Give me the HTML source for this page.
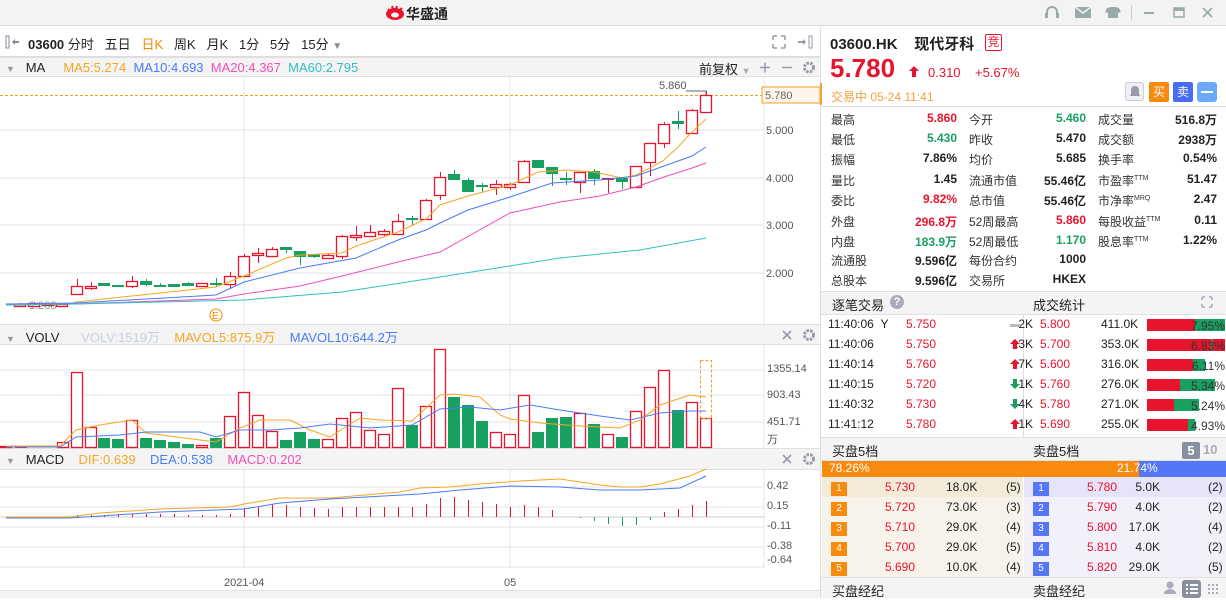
<!DOCTYPE html>
<html><head><meta charset="utf-8">
<style>
*{margin:0;padding:0;box-sizing:border-box}
body{width:1226px;height:598px;overflow:hidden;background:#fff;font-family:"Liberation Sans","Noto Sans CJK SC",sans-serif;font-size:12px;color:#222;position:relative}
.abs{position:absolute;white-space:nowrap}
.top{left:0;top:0;width:1226px;height:26px;background:#f3f3f3;border-bottom:1px solid #ddd}
.bar{background:#f4f4f4;border-top:1px solid #e0e0e0;border-bottom:1px solid #e0e0e0}
.r{color:#e8142c}.g{color:#18a060}.o{color:#f08a00}
.tbl div{position:absolute;white-space:nowrap;font-size:12px}
.lab{color:#333}
.b{font-weight:bold}
.num{display:inline-block;width:16px;height:14px;color:#fff;font-size:10px;text-align:center;line-height:14px}
</style></head><body>
<div class="abs top"></div>
<svg class="abs" style="left:384px;top:5px" width="22" height="16" viewBox="0 0 22 16"><ellipse cx="11" cy="9" rx="9" ry="6" fill="#e8142c"/><ellipse cx="11" cy="10" rx="4" ry="2.5" fill="#f3f3f3"/><path d="M4 4l2 2M8 1l1 3M13 1l-1 3M18 3l-2 2" stroke="#e8142c" stroke-width="2"/></svg>
<div class="abs b" style="left:406px;top:4px;font-size:14px;color:#222">华盛通</div>
<svg class="abs" style="left:1040px;top:4px" width="186" height="18" viewBox="0 0 186 18"><path d="M7 12v-4a5 5 0 0 1 10 0v4" stroke="#9aa" stroke-width="2" fill="none"/><rect x="5" y="9" width="3" height="5" fill="#9aa"/><rect x="16" y="9" width="3" height="5" fill="#9aa"/><rect x="35" y="3" width="16" height="11" fill="#9aa"/><path d="M35 3l8 6 8-6" stroke="#f3f3f3" stroke-width="1.5" fill="none"/><path d="M67 4l4-1h4l4 1 2 4-3 1v5h-10v-5l-3-1z" fill="#9aa"/><rect x="91" y="1" width="1" height="15" fill="#ccc"/><rect x="104" y="8" width="10" height="2" fill="#9aa"/><rect x="134" y="4" width="10" height="9" stroke="#9aa" stroke-width="1.5" fill="none"/><rect x="134" y="4" width="10" height="3" fill="#9aa"/><path d="M163 4l9 9M172 4l-9 9" stroke="#9aa" stroke-width="1.6"/></svg>

<div class="abs" style="left:0;top:27px;width:820px;height:30px;border-bottom:1px solid #ddd"></div>
<svg class="abs" style="left:5px;top:35px" width="18" height="14"><rect x="1" y="1" width="3" height="12" stroke="#889" fill="none"/><path d="M8 7h6" stroke="#889" stroke-width="2"/><path d="M7 7l3-3v6z" fill="#889"/></svg>
<div class="abs" style="left:28px;top:34px;font-size:13px"><b>03600</b> 分时&nbsp;&nbsp;&nbsp;五日&nbsp;&nbsp;&nbsp;<span class="o">日K</span>&nbsp;&nbsp;&nbsp;周K&nbsp;&nbsp;&nbsp;月K&nbsp;&nbsp;&nbsp;1分&nbsp;&nbsp;&nbsp;5分&nbsp;&nbsp;&nbsp;15分 <span style="color:#889;font-size:10px">▼</span></div>
<svg class="abs" style="left:772px;top:35px" width="44" height="14"><path d="M1 1h4M1 1v4M13 1h-4M13 1v4M1 13h4M1 13v-4M13 13h-4M13 13v-4" stroke="#99a" stroke-width="1.5"/><path d="M26 7h6" stroke="#99a" stroke-width="2"/><path d="M34 7l-3-3v6z" fill="#99a"/><rect x="37" y="1" width="3" height="12" stroke="#99a" fill="none"/></svg>

<div class="abs bar" style="left:0;top:57px;width:820px;height:20px"></div>
<div class="abs" style="left:6px;top:60px;font-size:13px"><span style="color:#999;font-size:9px">▼</span>&nbsp;&nbsp;&nbsp;MA&nbsp;&nbsp;&nbsp;&nbsp;&nbsp;<span style="color:#f5a623">MA5:5.274</span>&nbsp;&nbsp;<span style="color:#4a7cf5">MA10:4.693</span>&nbsp;&nbsp;<span style="color:#f050b8">MA20:4.367</span>&nbsp;&nbsp;<span style="color:#30c0c0">MA60:2.795</span></div>
<div class="abs" style="left:699px;top:59px;font-size:13px">前复权 <span style="color:#aab;font-size:9px">▼</span></div>
<svg class="abs" style="left:756px;top:60px" width="62" height="15"><path d="M4 7.5h10M9 2.5v10M26 7.5h10" stroke="#99a" stroke-width="1.5"/><circle cx="53" cy="7.5" r="4.5" stroke="#99a" stroke-width="3" fill="none" stroke-dasharray="2.5 1.2"/><circle cx="53" cy="7.5" r="2" fill="#f4f4f4"/></svg>

<div class="abs bar" style="left:0;top:324px;width:820px;height:21px"></div>
<div class="abs" style="left:6px;top:327px;font-size:13px"><span style="color:#999;font-size:9px">▼</span>&nbsp;&nbsp;&nbsp;VOLV&nbsp;&nbsp;&nbsp;&nbsp;&nbsp;&nbsp;<span style="color:#c8d0e0">VOLV:1519万</span>&nbsp;&nbsp;&nbsp;&nbsp;<span style="color:#f5a623">MAVOL5:875.9万</span>&nbsp;&nbsp;&nbsp;&nbsp;<span style="color:#4a7cf5">MAVOL10:644.2万</span></div>
<div class="abs bar" style="left:0;top:448px;width:820px;height:22px"></div>
<div class="abs" style="left:6px;top:452px;font-size:13px"><span style="color:#999;font-size:9px">▼</span>&nbsp;&nbsp;&nbsp;MACD&nbsp;&nbsp;&nbsp;&nbsp;<span style="color:#f5a623">DIF:0.639</span>&nbsp;&nbsp;&nbsp;&nbsp;<span style="color:#4a7cf5">DEA:0.538</span>&nbsp;&nbsp;&nbsp;&nbsp;<span style="color:#f050b8">MACD:0.202</span></div>
<svg class="abs" style="left:780px;top:328px" width="40" height="140"><g stroke="#99a" stroke-width="1.6"><path d="M3 3l8 8M11 3l-8 8M3 127l8 8M11 127l-8 8"/></g><g fill="none" stroke="#99a" stroke-width="3" stroke-dasharray="2.5 1.2"><circle cx="29" cy="7" r="4.5"/><circle cx="29" cy="131" r="4.5"/></g></svg>
<div class="abs" style="left:0;top:590px;width:820px;height:8px;background:#f4f4f4;border-top:1px solid #e0e0e0"></div>

<svg class="abs" id="ch" style="left:0;top:0" width="820" height="598">
<g stroke="#e4e4e8" stroke-width="1">
<path d="M0 130h764M0 178h764M0 225h764M0 273h764M0 370h764M0 395h764M0 422h764M0 487h764M0 507h764M0 527h764M0 547h764M0 567h764"/>
<path d="M244 77v247M244 345v103M244 470v98M510 77v247M510 345v103M510 470v98"/>
<path d="M764 77v247M764 345v103M764 470v98"/>
</g>
<path d="M0 517h764" stroke="#c8ccd4"/>
<path d="M0 95.5h764" stroke="#f0a020" stroke-dasharray="3 2"/>
<rect x="762" y="87" width="58" height="16" fill="#fff4ea" stroke="#f0a020"/>
<path d="M686 91h20v4" stroke="#666" fill="none"/>
<g font-size="11" fill="#555" font-family="Liberation Sans,sans-serif">
<text x="765" y="99" fill="#666">5.780</text>
<text x="659" y="89">5.860</text>
<text x="766" y="134">5.000</text><text x="766" y="182">4.000</text><text x="766" y="229">3.000</text><text x="766" y="277">2.000</text>
<text x="29" y="309" fill="#999">1.288</text>
<text x="767" y="372">1355.14</text><text x="767" y="398">903.43</text><text x="767" y="425">451.71</text><text x="767" y="443">万</text>
<text x="767" y="489">0.42</text><text x="767" y="509">0.15</text><text x="767" y="529">-0.11</text><text x="767" y="549">-0.38</text><text x="767" y="563">-0.64</text>
<text x="224" y="586">2021-04</text><text x="504" y="586">05</text>
</g>
<circle cx="216" cy="315" r="6" fill="#fff" stroke="#f08a00"/><text x="212" y="319" font-size="10" fill="#f08a00">E</text>
<g id="cd"></g>
<polyline fill="none" stroke="#f5a623" stroke-width="1" points="6,304 70,304 76,302 216,287 244,276 286,258 300,255 342,253 356,246 398,232 426,219 440,205 468,196 510,185 538,172 566,170 594,172 622,178 636,175 650,168 664,160 678,147 692,132 706,119"/>
<polyline fill="none" stroke="#4a7cf5" stroke-width="1" points="6,304 76,303 216,295 244,282 300,268 356,258 398,240 426,230 440,223 468,210 510,197 552,183 600,180 636,176 664,166 692,156 706,147"/>
<polyline fill="none" stroke="#f050b8" stroke-width="1" points="6,305 76,304 216,299 244,294 300,286 342,276 398,262 440,252 510,213 560,202 600,196 636,187 664,177 692,168 706,163"/>
<polyline fill="none" stroke="#30c0c0" stroke-width="1" points="6,305 76,304 244,300 342,292 440,277 560,258 640,250 706,238"/>
<polyline fill="none" stroke="#f5a623" points="6,446 60,446 76,430 100,425 132,420 146,433 200,440 216,442 240,428 260,420 290,420 310,430 330,437 360,418 380,420 412,421 440,395 454,394 480,397 500,415 510,419 540,423 580,426 620,428 640,420 660,405 690,395 706,397"/>
<polyline fill="none" stroke="#4a7cf5" points="6,447 60,447 76,437 120,435 146,432 200,432 216,437 240,430 270,430 300,428 330,424 370,428 412,425 440,409 470,407 500,410 530,405 560,410 600,416 630,420 660,413 690,411 706,411"/>
<polyline fill="none" stroke="#f5a623" points="6,517 70,517 100,513 160,509 230,507 244,504 280,498 330,498 400,492 420,488 450,487 480,484 520,481 560,479 600,485 620,487 640,487 660,484 690,476 706,469"/>
<polyline fill="none" stroke="#4a7cf5" points="6,518 70,518 100,516 160,512 244,509 280,503 330,499 420,494 460,490 510,486 560,487 600,490 640,490 680,488 706,476"/>
</svg>
<script>
var C=[[20,304,306,303,306,1],[34,303,306,302,306,1],[48,304,305,303,306,1],[62,304,306,303,306,1],
[77,286,294,279,294,1],[91,286,288,282,290,1],[104,283,286,283,286,0],[118,285,287,285,287,0],[132,281,286,276,288,1],[146,281,285,279,286,0],[160,285,287,283,287,0],[174,284,287,284,287,0],[188,283,286,282,286,0],[202,283,286,283,287,1],[216,283,285,278,287,0],[230,276,284,272,289,1],[244,256,276,254,276,1],[258,253,255,248,263,1],[272,249,256,247,256,1],[286,247,250,247,253,0],[300,251,257,251,265,0],[314,254,257,254,258,0],[328,255,258,254,259,1],[342,236,256,235,259,1],[356,235,237,226,241,1],[370,232,236,225,237,1],[384,231,234,229,236,1],[398,221,234,214,234,1],[412,218,220,216,225,0],[426,200,219,199,219,1],[440,177,195,172,200,1],[454,174,180,170,180,0],[468,180,192,178,192,0],[482,185,187,183,192,0],[496,184,187,180,195,1],[510,184,187,183,190,1],[524,161,182,160,182,1],[538,160,168,160,168,0],[552,167,174,167,186,0],[566,178,180,172,185,0],[580,172,182,172,193,1],[594,171,179,169,185,0],[608,178,180,178,193,2],[622,178,182,178,189,0],[636,166,187,166,187,1],[650,143,162,143,176,1],[664,124,143,122,148,1],[678,121,124,111,129,0],[692,110,133,109,133,1],[706,95,112,91,112,1]];
var V=[[6,446,1],[21,446,2],[35,447,1],[49,447,1],[63,442,1],[77,372,1],[91,427,1],[104,438,0],[118,439,0],[132,420,1],[146,438,0],[160,440,0],[174,442,0],[188,444,0],[202,445,1],[216,438,0],[230,416,1],[244,392,1],[258,415,1],[272,431,1],[286,440,0],[300,432,0],[314,439,0],[328,439,1],[342,418,1],[356,412,1],[370,430,1],[384,434,1],[398,388,1],[412,425,0],[426,406,1],[440,349,1],[454,397,0],[468,405,0],[482,421,0],[496,432,1],[510,434,1],[524,395,1],[538,432,0],[552,418,0],[566,417,0],[580,413,1],[594,424,0],[608,434,1],[622,437,0],[636,411,1],[650,387,1],[664,370,1],[678,410,0],[692,402,1],[706,418,1]];
var M=[[77,515],[91,515],[104,515],[118,514],[132,514],[146,514],[160,514],[174,514],[188,515],[202,515],[216,515],[230,514],[244,508],[258,507],[272,504],[286,505],[300,507],[314,508],[328,509],[342,507],[356,507],[370,507],[384,507],[398,507],[412,507],[426,504],[440,498],[454,497],[468,500],[482,502],[496,504],[510,507],[524,505],[538,507],[552,510],[580,518],[594,521],[608,524],[622,526],[636,525],[650,520],[664,512],[678,509],[692,505],[706,501]];
var s='';
C.forEach(function(c){var col=c[5]==0?'#18a060':'#e8142c';var x=c[0];
s+='<line x1="'+(x+.5)+'" y1="'+c[3]+'" x2="'+(x+.5)+'" y2="'+c[4]+'" stroke="'+col+'"/>';
var h=Math.max(c[2]-c[1],1);
if(c[5]==1)s+='<rect x="'+(x-5.5)+'" y="'+(c[1]+.5)+'" width="11" height="'+h+'" fill="#fff" stroke="'+col+'" stroke-width="1.3"/>';
else s+='<rect x="'+(x-6)+'" y="'+c[1]+'" width="12" height="'+h+'" fill="'+col+'"/>';});
V.forEach(function(v){var col=v[2]==0?'#18a060':'#e8142c';var h=448-v[1];
if(v[2]==1)s+='<rect x="'+(v[0]-5.5)+'" y="'+(v[1]+.5)+'" width="11" height="'+(h-1)+'" fill="#fff" stroke="'+col+'" stroke-width="1.3"/>';
else s+='<rect x="'+(v[0]-6)+'" y="'+v[1]+'" width="12" height="'+h+'" fill="'+col+'"/>';});
s+='<rect x="700.5" y="360.5" width="11" height="58" fill="none" stroke="#f0a020" stroke-dasharray="3 2"/>';
M.forEach(function(m){var col=m[1]>517?'#18a060':'#e8142c';s+='<line x1="'+(m[0]+.5)+'" y1="517" x2="'+(m[0]+.5)+'" y2="'+m[1]+'" stroke="'+col+'"/>';});
document.getElementById('cd').innerHTML=s;
</script>

<div class="abs" style="left:820px;top:27px;width:1px;height:571px;background:#ddd"></div>
<div class="abs b" style="left:830px;top:33px;font-size:15px">03600.HK&nbsp;&nbsp;&nbsp;&nbsp;现代牙科</div>
<div class="abs" style="left:985px;top:34px;width:17px;height:17px;border:1px solid #e8142c;border-radius:2px;color:#e8142c;font-size:12px;text-align:center;line-height:15px">竞</div>
<div class="abs b r" style="left:830px;top:53px;font-size:26px">5.780</div>
<svg class="abs" style="left:909px;top:66px" width="10" height="11"><path d="M5 0l5 5h-3v6h-4v-6h-3z" fill="#e8142c"/></svg>
<div class="abs r" style="left:928px;top:65px;font-size:13px">0.310&nbsp;&nbsp;&nbsp;&nbsp;+5.67%</div>
<div class="abs o" style="left:831px;top:88px;font-size:12px;color:#f5a040">交易中 05-24 11:41</div>
<div class="abs" style="left:820px;top:83px;width:2px;height:22px;background:#f5a040"></div>
<div class="abs" style="left:1125px;top:82px;width:19px;height:19px;border:1px solid #ccd;border-radius:3px;background:#eef0f4"></div>
<svg class="abs" style="left:1129px;top:85px" width="12" height="13"><path d="M6 1a4 4 0 0 1 4 4v4l1 2h-10l1-2v-4a4 4 0 0 1 4-4z" fill="#99a"/></svg>
<div class="abs" style="left:1149px;top:82px;width:20px;height:20px;background:#f98a10;color:#fff;text-align:center;line-height:20px;border-radius:2px">买</div>
<div class="abs" style="left:1173px;top:82px;width:20px;height:20px;background:#4a6cf5;color:#fff;text-align:center;line-height:20px;border-radius:2px">卖</div>
<div class="abs" style="left:1197px;top:82px;width:20px;height:20px;background:#6aaaf8;border-radius:3px"></div>
<div class="abs" style="left:1201px;top:91px;width:12px;height:2px;background:#fff"></div>
<div class="abs" style="left:821px;top:106px;width:405px;height:1px;background:#ddd"></div>

<div class="tbl">
<div class="lab" style="left:831px;top:111px">最高</div><div class="b r" style="right:269px;top:111px">5.860</div>
<div class="lab" style="left:969px;top:111px">今开</div><div class="b g" style="right:140px;top:111px">5.460</div>
<div class="lab" style="left:1098px;top:111px">成交量</div><div class="b" style="right:9px;top:111px">516.8万</div>
<div class="lab" style="left:831px;top:131px">最低</div><div class="b g" style="right:269px;top:131px">5.430</div>
<div class="lab" style="left:969px;top:131px">昨收</div><div class="b" style="right:140px;top:131px">5.470</div>
<div class="lab" style="left:1098px;top:131px">成交额</div><div class="b" style="right:9px;top:131px">2938万</div>
<div class="lab" style="left:831px;top:151px">振幅</div><div class="b" style="right:269px;top:151px">7.86%</div>
<div class="lab" style="left:969px;top:151px">均价</div><div class="b" style="right:140px;top:151px">5.685</div>
<div class="lab" style="left:1098px;top:151px">换手率</div><div class="b" style="right:9px;top:151px">0.54%</div>
<div class="lab" style="left:831px;top:172px">量比</div><div class="b" style="right:269px;top:172px">1.45</div>
<div class="lab" style="left:969px;top:172px">流通市值</div><div class="b" style="right:140px;top:172px">55.46亿</div>
<div class="lab" style="left:1098px;top:172px">市盈率<sup style="font-size:7px">TTM</sup></div><div class="b" style="right:9px;top:172px">51.47</div>
<div class="lab" style="left:831px;top:192px">委比</div><div class="b r" style="right:269px;top:192px">9.82%</div>
<div class="lab" style="left:969px;top:192px">总市值</div><div class="b" style="right:140px;top:192px">55.46亿</div>
<div class="lab" style="left:1098px;top:192px">市净率<sup style="font-size:7px">MRQ</sup></div><div class="b" style="right:9px;top:192px">2.47</div>
<div class="lab" style="left:831px;top:213px">外盘</div><div class="b r" style="right:269px;top:213px">296.8万</div>
<div class="lab" style="left:969px;top:213px">52周最高</div><div class="b r" style="right:140px;top:213px">5.860</div>
<div class="lab" style="left:1098px;top:213px">每股收益<sup style="font-size:7px">TTM</sup></div><div class="b" style="right:9px;top:213px">0.11</div>
<div class="lab" style="left:831px;top:233px">内盘</div><div class="b g" style="right:269px;top:233px">183.9万</div>
<div class="lab" style="left:969px;top:233px">52周最低</div><div class="b g" style="right:140px;top:233px">1.170</div>
<div class="lab" style="left:1098px;top:233px">股息率<sup style="font-size:7px">TTM</sup></div><div class="b" style="right:9px;top:233px">1.22%</div>
<div class="lab" style="left:831px;top:252px">流通股</div><div class="b" style="right:269px;top:252px">9.596亿</div>
<div class="lab" style="left:969px;top:252px">每份合约</div><div class="b" style="right:140px;top:252px">1000</div>
<div class="lab" style="left:831px;top:272px">总股本</div><div class="b" style="right:269px;top:272px">9.596亿</div>
<div class="lab" style="left:969px;top:272px">交易所</div><div class="b" style="right:140px;top:272px">HKEX</div>
</div>

<div class="abs bar" style="left:821px;top:291px;width:405px;height:24px"></div>
<div class="abs" style="left:832px;top:295px;font-size:13px">逐笔交易</div>
<div class="abs" style="left:890px;top:295px;width:14px;height:14px;border-radius:7px;background:#aab;color:#fff;font-size:11px;text-align:center;line-height:14px;font-weight:bold">?</div>
<div class="abs" style="left:1033px;top:295px;font-size:13px">成交统计</div>
<svg class="abs" style="left:1201px;top:296px" width="12" height="12"><path d="M1 1h3M1 1v3M11 1h-3M11 1v3M1 11h3M1 11v-3M11 11h-3M11 11v-3" stroke="#aab" stroke-width="1.5"/></svg>
<div class="abs" style="left:1023px;top:315px;width:1px;height:122px;background:#ddd"></div>
<div class="tbl" style="font-size:12px">
<div style="left:828px;top:317px">11:40:06&nbsp;&nbsp;Y</div><div class="r" style="left:906px;top:317px">5.750</div><div style="right:193px;top:317px">2K</div>
<div style="left:828px;top:337px">11:40:06</div><div class="r" style="left:906px;top:337px">5.750</div><div style="right:193px;top:337px">13K</div>
<div style="left:828px;top:357px">11:40:14</div><div class="r" style="left:906px;top:357px">5.760</div><div style="right:193px;top:357px">7K</div>
<div style="left:828px;top:377px">11:40:15</div><div class="r" style="left:906px;top:377px">5.720</div><div style="right:193px;top:377px">1K</div>
<div style="left:828px;top:397px">11:40:32</div><div class="r" style="left:906px;top:397px">5.730</div><div style="right:193px;top:397px">4K</div>
<div style="left:828px;top:417px">11:41:12</div><div class="r" style="left:906px;top:417px">5.780</div><div style="right:193px;top:417px">1K</div>
<div class="r" style="left:1040px;top:317px">5.800</div><div style="left:1101px;top:317px">411.0K</div>
<div class="r" style="left:1040px;top:337px">5.700</div><div style="left:1101px;top:337px">353.0K</div>
<div class="r" style="left:1040px;top:357px">5.600</div><div style="left:1101px;top:357px">316.0K</div>
<div class="r" style="left:1040px;top:377px">5.760</div><div style="left:1101px;top:377px">276.0K</div>
<div class="r" style="left:1040px;top:397px">5.780</div><div style="left:1101px;top:397px">271.0K</div>
<div class="r" style="left:1040px;top:417px">5.690</div><div style="left:1101px;top:417px">255.0K</div>
</div>
<svg class="abs" style="left:1010px;top:318px" width="216" height="118">
<rect x="0" y="6" width="10" height="3" fill="#bbb"/>
<path d="M5 21l5 5h-3v5h-4v-5h-3z M5 41l5 5h-3v5h-4v-5h-3z M5 101l5 5h-3v5h-4v-5h-3z" fill="#e8142c"/>
<path d="M5 71l5-5h-3v-5h-4v5h-3z M5 91l5-5h-3v-5h-4v5h-3z" fill="#18a060"/>
<rect x="137" y="1" width="78" height="12" fill="#e8142c"/><rect x="185" y="1" width="30" height="12" fill="#18a060"/>
<rect x="137" y="21" width="78" height="12" fill="#e8142c"/><rect x="201" y="21" width="2" height="12" fill="#18a060"/>
<rect x="137" y="41" width="58" height="12" fill="#e8142c"/><rect x="183" y="41" width="12" height="12" fill="#18a060"/>
<rect x="137" y="61" width="33" height="12" fill="#e8142c"/><rect x="170" y="61" width="35" height="12" fill="#18a060"/>
<rect x="137" y="81" width="27" height="12" fill="#e8142c"/><rect x="164" y="81" width="25" height="12" fill="#18a060"/>
<rect x="137" y="101" width="41" height="12" fill="#e8142c"/><rect x="178" y="101" width="7" height="12" fill="#18a060"/>
<g font-size="12" fill="#333" font-family="Liberation Sans,sans-serif" text-anchor="end"><text x="215" y="12">7.95%</text><text x="215" y="32">6.83%</text><text x="215" y="52">6.11%</text><text x="215" y="72">5.34%</text><text x="215" y="92">5.24%</text><text x="215" y="112">4.93%</text></g>
</svg>

<div class="abs bar" style="left:821px;top:437px;width:405px;height:24px"></div>
<div class="abs" style="left:832px;top:441px;font-size:13px">买盘5档</div>
<div class="abs" style="left:1033px;top:441px;font-size:13px">卖盘5档</div>
<div class="abs b" style="left:1182px;top:442px;width:18px;height:17px;background:#8890a0;color:#fff;text-align:center;line-height:17px;border-radius:2px;font-size:13px">5</div>
<div class="abs b" style="left:1203px;top:442px;color:#aab;font-size:13px">10</div>
<div class="abs" style="left:822px;top:461px;width:317px;height:16px;background:#f98a10"></div>
<div class="abs" style="left:1139px;top:461px;width:87px;height:16px;background:#5577f7"></div>
<div class="abs" style="left:829px;top:461px;color:#fff;font-size:12px">78.26%</div>
<div class="abs" style="left:1117px;top:461px;color:#fff;font-size:12px">21.74%</div>
<div class="abs" style="left:822px;top:477px;width:201px;height:20px;background:#f3ead8"></div>
<div class="abs" style="left:822px;top:497px;width:201px;height:80px;background:#f8f3ea"></div>
<div class="abs" style="left:1024px;top:477px;width:202px;height:20px;background:#e6e4f8"></div>
<div class="abs" style="left:1024px;top:497px;width:202px;height:80px;background:#f1f0fb"></div>
<div class="tbl">
<div style="left:831px;top:480px"><span class="num" style="background:#f98a10">1</span></div><div class="r" style="left:885px;top:480px">5.730</div><div style="left:946px;top:480px">18.0K</div><div style="left:1006px;top:480px">(5)</div>
<div style="left:831px;top:500px"><span class="num" style="background:#f98a10">2</span></div><div class="r" style="left:885px;top:500px">5.720</div><div style="left:946px;top:500px">73.0K</div><div style="left:1006px;top:500px">(3)</div>
<div style="left:831px;top:520px"><span class="num" style="background:#f98a10">3</span></div><div class="r" style="left:885px;top:520px">5.710</div><div style="left:946px;top:520px">29.0K</div><div style="left:1006px;top:520px">(4)</div>
<div style="left:831px;top:540px"><span class="num" style="background:#f98a10">4</span></div><div class="r" style="left:885px;top:540px">5.700</div><div style="left:946px;top:540px">29.0K</div><div style="left:1006px;top:540px">(5)</div>
<div style="left:831px;top:560px"><span class="num" style="background:#f98a10">5</span></div><div class="r" style="left:885px;top:560px">5.690</div><div style="left:946px;top:560px">10.0K</div><div style="left:1006px;top:560px">(4)</div>
<div style="left:1033px;top:480px"><span class="num" style="background:#5577f7">1</span></div><div class="r" style="left:1087px;top:480px">5.780</div><div style="right:66px;top:480px">5.0K</div><div style="left:1208px;top:480px">(2)</div>
<div style="left:1033px;top:500px"><span class="num" style="background:#5577f7">2</span></div><div class="r" style="left:1087px;top:500px">5.790</div><div style="right:66px;top:500px">4.0K</div><div style="left:1208px;top:500px">(2)</div>
<div style="left:1033px;top:520px"><span class="num" style="background:#5577f7">3</span></div><div class="r" style="left:1087px;top:520px">5.800</div><div style="right:66px;top:520px">17.0K</div><div style="left:1208px;top:520px">(4)</div>
<div style="left:1033px;top:540px"><span class="num" style="background:#5577f7">4</span></div><div class="r" style="left:1087px;top:540px">5.810</div><div style="right:66px;top:540px">4.0K</div><div style="left:1208px;top:540px">(2)</div>
<div style="left:1033px;top:560px"><span class="num" style="background:#5577f7">5</span></div><div class="r" style="left:1087px;top:560px">5.820</div><div style="right:66px;top:560px">29.0K</div><div style="left:1208px;top:560px">(5)</div>
</div>
<div class="abs bar" style="left:821px;top:577px;width:405px;height:21px;border-bottom:none"></div>
<div class="abs" style="left:832px;top:581px;font-size:13px">买盘经纪</div>
<div class="abs" style="left:1033px;top:581px;font-size:13px">卖盘经纪</div>
<svg class="abs" style="left:1160px;top:579px" width="66" height="19"><circle cx="10" cy="6" r="3.5" fill="#aab"/><path d="M4 15a6 5 0 0 1 12 0z" fill="#aab"/><rect x="22" y="1" width="19" height="18" rx="3" fill="#8890a0"/><path d="M26 6h2M30 6h8M26 10h2M30 10h8M26 14h2M30 14h8" stroke="#fff" stroke-width="2"/><g fill="#aab"><rect x="48" y="5" width="2" height="2"/><rect x="52" y="5" width="2" height="2"/><rect x="56" y="5" width="2" height="2"/><rect x="48" y="9" width="2" height="2"/><rect x="52" y="9" width="2" height="2"/><rect x="56" y="9" width="2" height="2"/><rect x="48" y="13" width="2" height="2"/><rect x="52" y="13" width="2" height="2"/><rect x="56" y="13" width="2" height="2"/></g></svg>
</body></html>
